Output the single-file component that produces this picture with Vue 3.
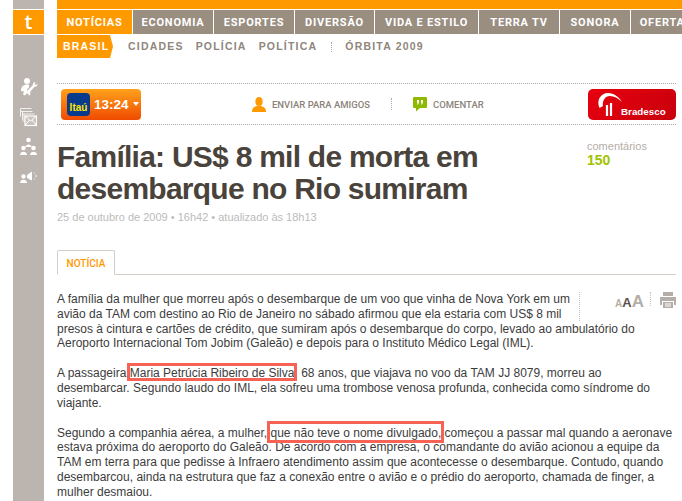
<template>
  <div class="page">
    <aside class="rail">
      <div class="rail-logo">t</div>
      <div class="rail-icons">
        <svg width="18" height="20" viewBox="0 0 18 20" fill="#fff"><circle cx="7" cy="4" r="3"/><path d="M1 14c0-4 2-6 5-6.500h3v3l-2 2 1 2-3 4-2-1 1-3z"/><path d="M8 13l5-5c-.5-1.500.5-3 2.500-3l-1 2 1.500 1 1.500-1.500c.3 2-1 3.500-3 3.300L10 15c1 1 .5 3-1 3.500l-1-2-1.500 .5z"/></svg>
        <svg width="17" height="20" viewBox="0 0 17 20" fill="none" stroke="#fff"><path d="M.5 1.500h11M.5 1.500v8M.5 4.500h12M2.500 4.500v9M2.500 7h12M4 7v8" stroke-opacity=".8"/><rect x="5" y="9" width="11.500" height="9.500" fill="#fff" fill-opacity=".2" stroke-width="1.200"/><path d="M5 9l5.700 5 5.800-5M5 18.500l4.500-5.500M16.500 18.500L12 13"/></svg>
        <svg width="17" height="19" viewBox="0 0 17 19" fill="#fff"><circle cx="8.500" cy="3" r="2.300"/><path d="M5.500 10c0-3.500 6-3.500 6 0z"/><circle cx="3.500" cy="11" r="2.300"/><path d="M0 18c0-4.500 7-4.500 7 0z"/><circle cx="13.500" cy="11" r="2.300"/><path d="M10 18c0-4.500 7-4.500 7 0z"/></svg>
        <svg class="horn" width="18" height="13" viewBox="0 0 18 13" fill="#fff"><circle cx="3.500" cy="5.500" r="2.200"/><path d="M0 12c0-4.500 7-4.500 7 0z"/><path d="M7 4l5-3.500v9L7 7z"/><path d="M14 1.500l1 1M15 5h2M14 8.500l1-1" stroke="#fff" fill="none"/></svg>
      </div>
    </aside>

    <main class="main">
      <div class="top-strip"></div>
      <nav class="nav">
        <a v-for="(item, i) in menu" :key="item.label" class="nav-item" :class="{ active: i === 0 }" :style="{ width: item.w + 'px' }">{{ item.label }}</a>
      </nav>
      <div class="subnav">
        <span class="sub-active">BRASIL</span>
        <a>CIDADES</a>
        <a>POLÍCIA</a>
        <a>POLÍTICA</a>
        <i class="sub-sep"></i>
        <a>ÓRBITA 2009</a>
      </div>

      <div class="content">
        <div class="toolbar">
          <div class="itau">
            <span class="itau-logo">Itaú</span>
            <span class="itau-time">13:24</span>
            <i class="caret"></i>
          </div>
          <div class="tool send">
            <svg width="14" height="15" viewBox="0 0 14 15" fill="#ff9900"><ellipse cx="7" cy="4.500" rx="3.600" ry="4.500"/><path d="M0 15c0-4 2-5 5-6h4c3 1 5 2 5 6z"/></svg>
            ENVIAR PARA AMIGOS
          </div>
          <i class="tool-sep"></i>
          <div class="tool comment">
            <svg width="14" height="15" viewBox="0 0 14 15"><path d="M1 0h12a1 1 0 0 1 1 1v9a1 1 0 0 1-1 1H7l-4 3.500V11H1a1 1 0 0 1-1-1V1a1 1 0 0 1 1-1z" fill="#8fb900"/><path d="M4 3h2v2.500L5 7.500H4l.6-2H4zM8 3h2v2.500L9 7.500H8l.6-2H8z" fill="#fff"/></svg>
            COMENTAR
          </div>
          <div class="bradesco">
            <svg width="27" height="27" viewBox="0 0 27 27" fill="none" stroke="#fff"><path d="M3.500 17C0 9 5 2 12 2c6 0 11 4 14 9-4-4-8-6-12-6-5 0-8 5-7 10z" fill="#fff" stroke="none"/><path d="M11 14v11M15 12v13" stroke-width="2.200"/></svg>
            <span>Bradesco</span>
          </div>
        </div>

        <header class="headline">
          <h1>Família: US$ 8 mil de morta em desembarque no Rio sumiram</h1>
          <div class="comments">
            <span>comentários</span>
            <b>150</b>
          </div>
        </header>
        <p class="date">25 de outubro de 2009 • 16h42 • atualizado às 18h13</p>

        <div class="tabs"><span class="tab">NOTÍCIA</span></div>

        <article class="article">
          <div class="article-tools">
            <span class="sizes"><i class="s1">A</i><i class="s2">A</i><i class="s3">A</i></span>
            <i class="tools-sep"></i>
            <svg width="16" height="16" viewBox="0 0 16 16" fill="#b5aea8"><path d="M3 0h10v4H3z"/><path d="M0 5h16v8h-2V9H2v4H0z"/><path d="M3 10h10v6H3z"/><path d="M5 12h6M5 14h6" stroke="#fff"/></svg>
          </div>
          <p>A família da mulher que morreu após o desembarque de um voo que vinha de Nova York em um avião da TAM com destino ao Rio de Janeiro no sábado afirmou que ela estaria com US$ 8 mil presos à cintura e cartões de crédito, que sumiram após o desembarque do corpo, levado ao ambulatório do Aeroporto Internacional Tom Jobim (Galeão) e depois para o Instituto Médico Legal (IML).</p>
          <p>A passageira <span class="mark mark-name">Maria Petrúcia Ribeiro de Silva</span>, 68 anos, que viajava no voo da TAM JJ 8079, morreu ao desembarcar. Segundo laudo do IML, ela sofreu uma trombose venosa profunda, conhecida como síndrome do viajante.</p>
          <p>Segundo a companhia aérea, a mulher, <span class="mark mark-anon">que não teve o nome divulgado,</span> começou a passar mal quando a aeronave estava próxima do aeroporto do Galeão. De acordo com a empresa, o comandante do avião acionou a equipe da TAM em terra para que pedisse à Infraero atendimento assim que acontecesse o desembarque. Contudo, quando desembarcou, ainda na estrutura que faz a conexão entre o avião e o prédio do aeroporto, chamada de finger, a mulher desmaiou.</p>
        </article>
      </div>
    </main>
  </div>
</template>

<script setup>
const menu = [
  { label: 'NOTÍCIAS', w: 75 },
  { label: 'ECONOMIA', w: 80 },
  { label: 'ESPORTES', w: 80 },
  { label: 'DIVERSÃO', w: 79 },
  { label: 'VIDA E ESTILO', w: 103 },
  { label: 'TERRA TV', w: 80 },
  { label: 'SONORA', w: 70 },
  { label: 'OFERTAS', w: 70 }
]
</script>

<style>
html, body { margin: 0; background: #fff; }
</style>

<style scoped>
.page {
  display: flex;
  width: 682px;
  height: 501px;
  overflow: hidden;
  padding-left: 13px;
  box-sizing: border-box;
  font-family: "Liberation Sans", Arial, sans-serif;
  background: #fff;
}

.rail {
  flex: 0 0 31px;
  margin-right: 13px;
  background: #bcb4ae;
  padding-top: 9px;
}
.rail-logo {
  height: 24px;
  border-top: 1px solid #fff;
  border-bottom: 1px solid #fff;
  background: #ff9900;
  color: #fff;
  font: 600 20px/24px "Open Sans", sans-serif;
  text-align: center;
}
.rail-icons {
  display: flex;
  flex-direction: column;
  align-items: center;
  gap: 10px;
  padding-top: 42px;
}
.horn { margin-top: 5px; }

.main { flex: 1; min-width: 0; }
.top-strip { height: 9px; background: #ff9900; }

.nav {
  display: flex;
  gap: 1px;
  margin-top: 1px;
  overflow: hidden;
}
.nav-item {
  flex: none;
  height: 24px;
  background: #9a8e81;
  color: #fff;
  font: bold 11px/25px Roboto, sans-serif;
  letter-spacing: 0.800px;
  text-align: center;
  white-space: nowrap;
}
.nav-item.active { background: #ff9900; }

.subnav {
  display: flex;
  align-items: center;
  height: 23px;
  margin-top: 1px;
  font-size: 10.500px;
  font-weight: bold;
  letter-spacing: 1.200px;
  color: #8f867c;
}
.subnav a { margin: 0 12px 2px 0; white-space: nowrap; }
.sub-active {
  height: 23px;
  width: 56px;
  margin-right: 15px;
  box-sizing: border-box;
  padding-left: 6px;
  line-height: 22px;
  color: #fff;
  background: #ff9900;
  clip-path: polygon(0 0, 53px 0, 100% 50%, 53px 100%, 0 100%);
}
.sub-sep {
  width: 0;
  height: 10px;
  border-left: 1px dotted #aaa;
  margin: 0 13px 0 2px;
}

.content { padding-right: 6px; }

.toolbar {
  display: flex;
  align-items: center;
  height: 40px;
  margin-top: 25px;
  border-top: 1px dotted #aaa;
  border-bottom: 1px dotted #aaa;
}
.itau {
  display: flex;
  align-items: center;
  width: 80px;
  height: 31px;
  margin-left: 4px;
  border-radius: 4px;
  background: linear-gradient(#ffa21c, #f04a00);
  box-sizing: border-box;
  padding-left: 6px;
}
.itau-logo {
  width: 23px;
  height: 23px;
  border-radius: 4px;
  background: #0a3a8c;
  color: #ffe600;
  font-size: 10px;
  font-weight: bold;
  line-height: 29px;
  text-align: center;
}
.itau-time {
  margin-left: 4px;
  color: #fff;
  font-size: 13.500px;
  font-weight: bold;
}
.caret {
  margin-left: 4px;
  border: 3px solid transparent;
  border-top: 4px solid #fff;
  border-bottom: 0;
}
.tool {
  display: flex;
  align-items: center;
  gap: 6px;
  color: #8b837a;
  font: 500 9.500px Roboto, sans-serif;
  white-space: nowrap;
}
.send { margin-left: 111px; }
.tool-sep {
  height: 12px;
  border-left: 1px dotted #aaa;
  margin: 0 21px;
}
.bradesco {
  display: flex;
  align-items: flex-end;
  box-sizing: border-box;
  width: 88px;
  height: 31px;
  margin-left: auto;
  padding: 2px 0 2px 8px;
  border-radius: 5px;
  background: linear-gradient(135deg, #e8000f, #c8000c);
  color: #fff;
  font-size: 9.800px;
  font-weight: bold;
}
.bradesco span { margin-left: -2px; line-height: 12px; }

.headline { display: flex; margin-top: 16px; }
h1 {
  width: 530px;
  margin: 0;
  color: #4a433c;
  font-size: 30px;
  line-height: 32px;
  letter-spacing: -0.750px;
  font-weight: bold;
}
.comments {
  display: flex;
  flex-direction: column;
  font-size: 11px;
  color: #b5aea8;
  line-height: 13px;
  margin-top: -1px;
}
.comments b { color: #a0c400; font-size: 14px; line-height: 15px; }

.date { margin: 6px 0 0; font-size: 11px; line-height: 13px; color: #bbb; }

.tabs {
  margin-top: 26px;
  height: 24px;
  border-bottom: 1px solid #d5cdc8;
}
.tab {
  display: block;
  box-sizing: border-box;
  width: 58px;
  height: 25px;
  border: 1px solid #d5cdc8;
  border-bottom-color: #fff;
  border-radius: 2px 2px 0 0;
  color: #ff9900;
  font: 500 10px/26px Roboto, sans-serif;
  text-align: center;
}

.article {
  margin-top: 17px;
  font-size: 12px;
  line-height: 14.750px;
  color: #3c3c3c;
}
.article p { margin: 0 0 15.200px; }
.article-tools {
  float: right;
  display: flex;
  align-items: flex-start;
  box-sizing: border-box;
  width: 97px;
  height: 29px;
  padding: 0 0 0 35px;
  border-left: 1px dotted #c8c2bc;
  margin-left: 3px;
}
.sizes { margin-top: 1px; color: #b5aea8; font-weight: bold; line-height: 17px; white-space: nowrap; }
.sizes i { font-style: normal; }
.s1 { font-size: 10px; }
.s2 { font-size: 13px; color: #5a524b; }
.s3 { font-size: 17px; }
.tools-sep { height: 14px; margin: 0 9px 0 6px; border-left: 1px dotted #c8c2bc; }

.mark { position: relative; }
.mark::after {
  content: "";
  position: absolute;
  border: 3px solid #f66355;
  pointer-events: none;
}
.mark-name::after { inset: -3px -3px -1px -3px; }
.mark-anon::after { inset: -5px -3px -3px -3px; }
</style>
